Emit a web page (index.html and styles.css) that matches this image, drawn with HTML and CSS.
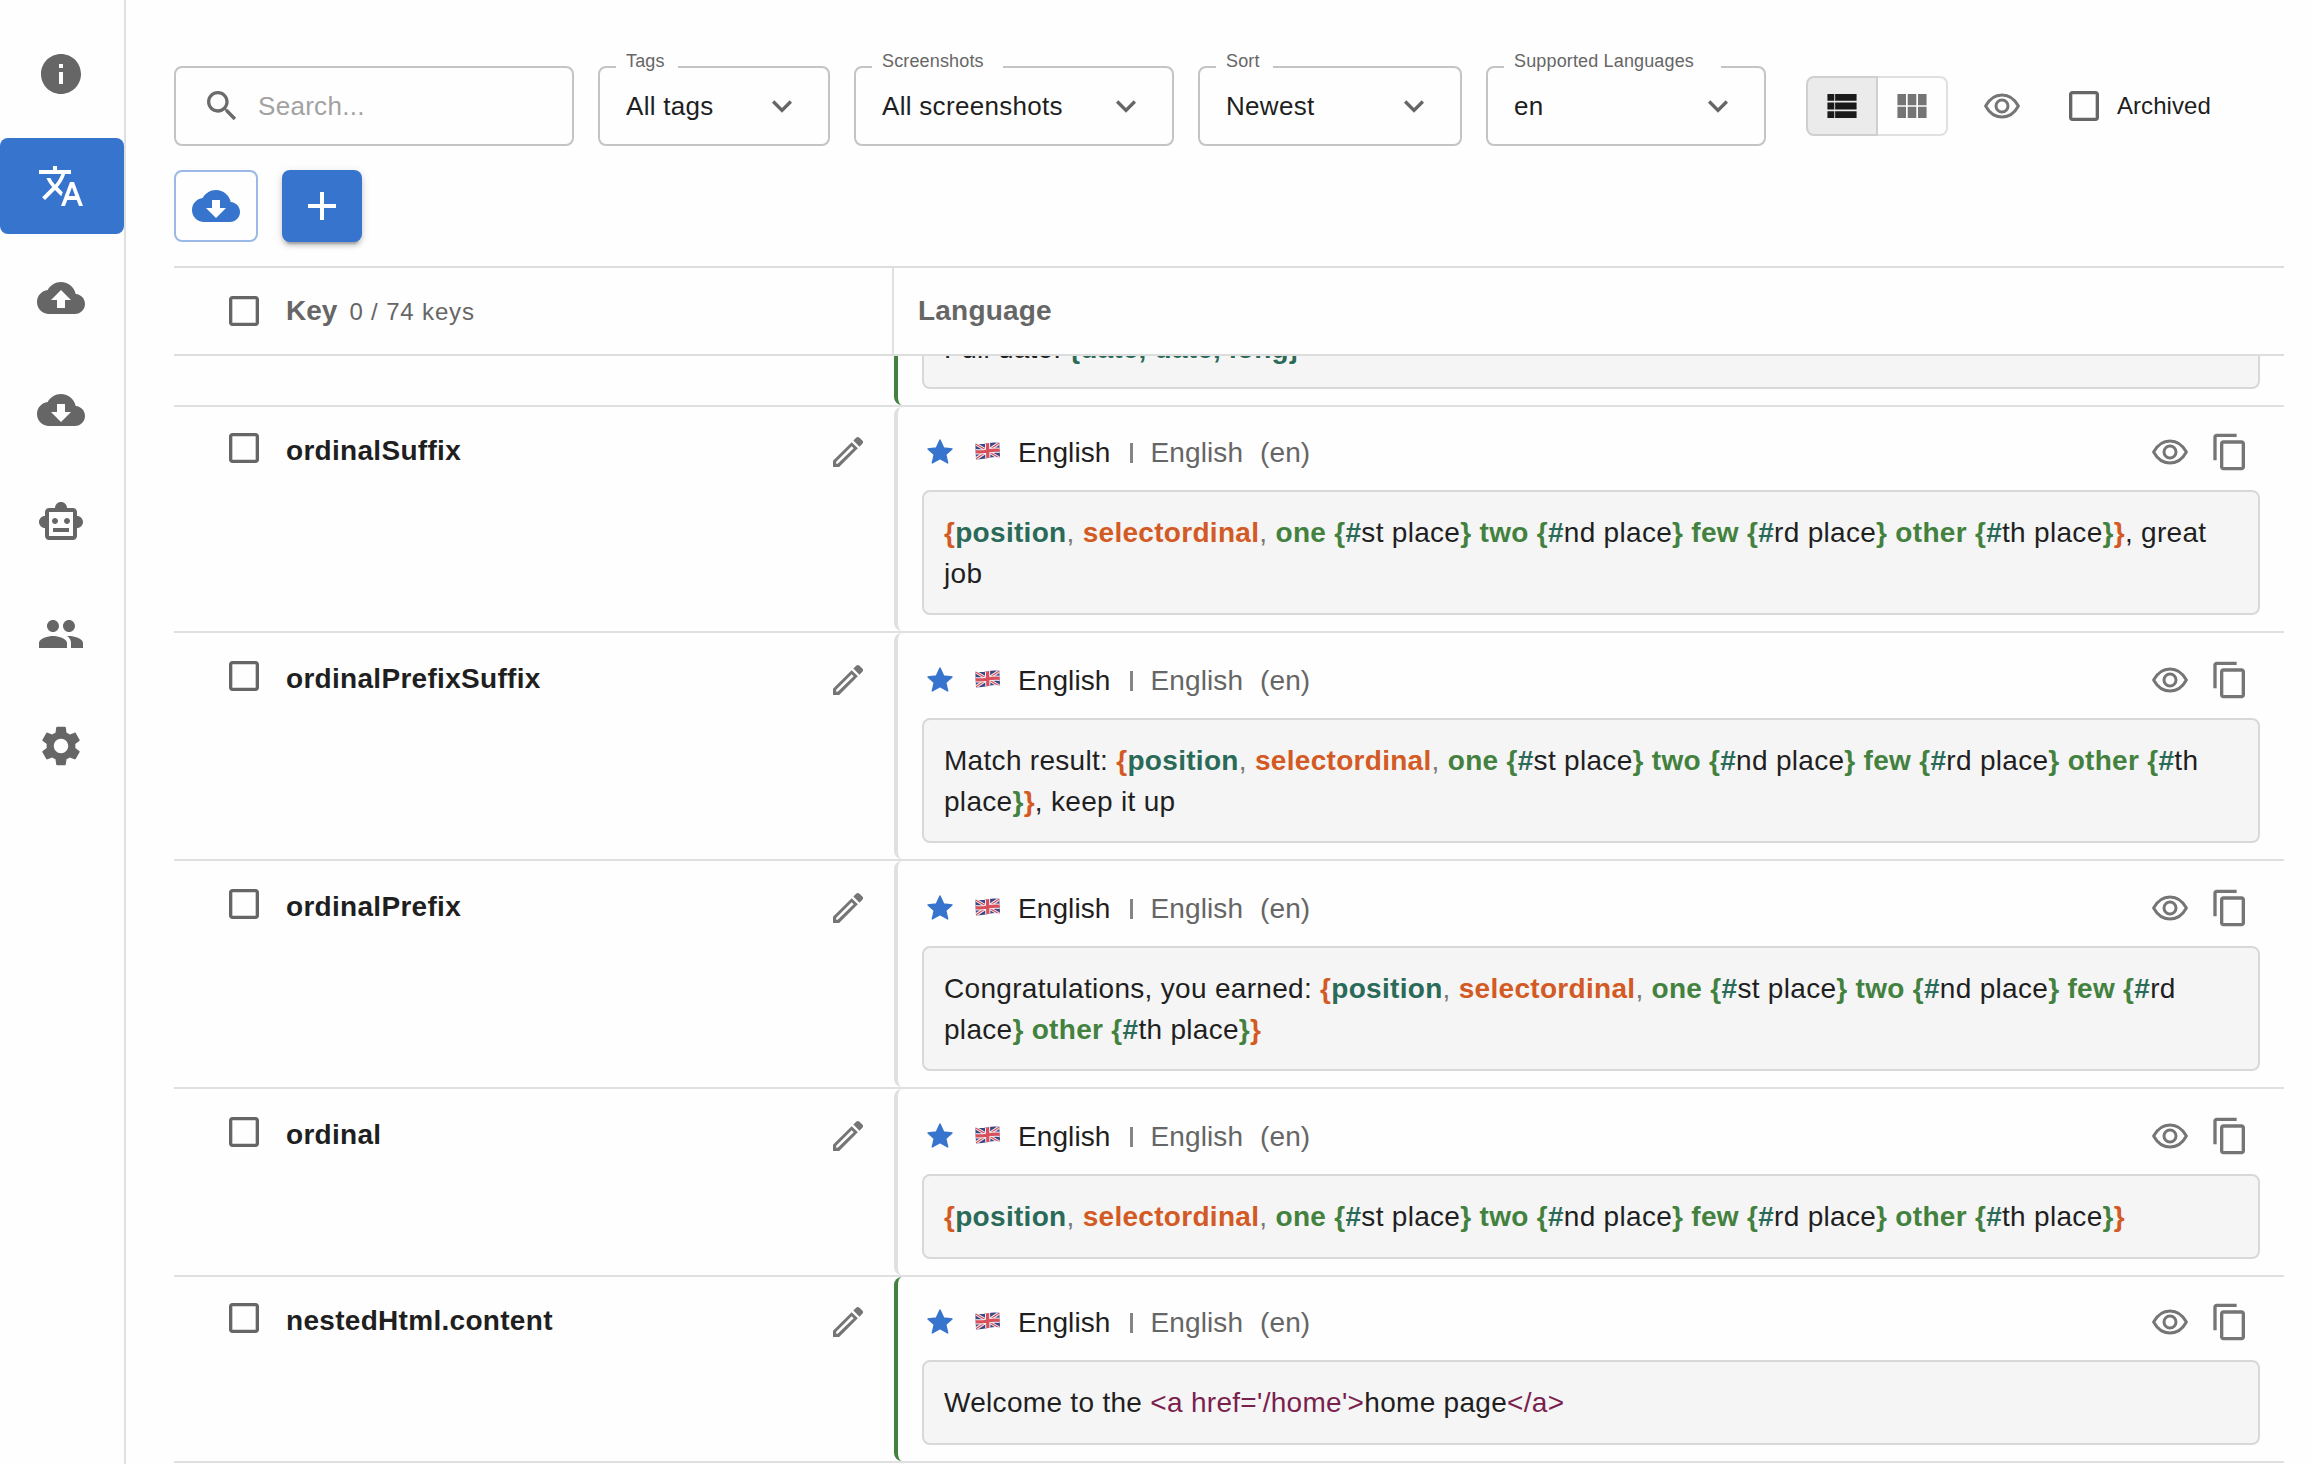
FILE: index.html
```html
<!DOCTYPE html>
<html lang="en">
<head>
<meta charset="utf-8">
<title>Translations</title>
<link rel="stylesheet" href="styles.css">
</head>
<body>
<svg class="defs" width="0" height="0" aria-hidden="true">
  <symbol id="info" viewBox="0 0 24 24"><path d="M12 2C6.48 2 2 6.48 2 12s4.480 10 10 10 10-4.480 10-10S17.520 2 12 2zm1 15h-2v-6h2v6zm0-8h-2V7h2v2z"/></symbol>
  <symbol id="translate" viewBox="0 0 24 24"><path d="M12.870 15.070l-2.540-2.510.03-.03c1.740-1.940 2.980-4.170 3.710-6.530H17V4h-7V2H8v2H1v1.990h11.170C11.500 7.920 10.440 9.750 9 11.350 8.070 10.320 7.300 9.190 6.690 8h-2c.73 1.630 1.730 3.170 2.980 4.560l-5.090 5.020L4 19l5-5 3.110 3.110.76-2.040zM18.500 10h-2L12 22h2l1.120-3h4.750L21 22h2l-4.500-12zm-2.620 7l1.620-4.330L19.120 17h-3.240z"/></symbol>
  <symbol id="upload" viewBox="0 0 24 24"><path d="M19.350 10.040C18.670 6.590 15.640 4 12 4 9.110 4 6.600 5.640 5.350 8.040 2.340 8.360 0 10.910 0 14c0 3.310 2.690 6 6 6h13c2.760 0 5-2.240 5-5 0-2.640-2.050-4.780-4.650-4.960zM14 13v4h-4v-4H7l5-5 5 5h-3z"/></symbol>
  <symbol id="download" viewBox="0 0 24 24"><path d="M19.350 10.040C18.670 6.590 15.640 4 12 4 9.110 4 6.600 5.640 5.350 8.040 2.340 8.360 0 10.910 0 14c0 3.310 2.690 6 6 6h13c2.760 0 5-2.240 5-5 0-2.640-2.050-4.780-4.650-4.960zM17 13l-5 5-5-5h3V9h4v4h3z"/></symbol>
  <symbol id="robot" viewBox="0 0 24 24"><path d="M20 9V7c0-1.100-.9-2-2-2h-3c0-1.660-1.340-3-3-3S9 3.340 9 5H6c-1.100 0-2 .9-2 2v2c-1.660 0-3 1.340-3 3s1.340 3 3 3v4c0 1.100.9 2 2 2h12c1.100 0 2-.9 2-2v-4c1.660 0 3-1.340 3-3s-1.340-3-3-3zm-2 10H6V7h12v12zm-9-6c-.83 0-1.500-.67-1.500-1.500S8.170 10 9 10s1.500.67 1.500 1.500S9.830 13 9 13zm7.500-1.500c0 .83-.67 1.500-1.500 1.500s-1.500-.67-1.500-1.500.67-1.500 1.500-1.500 1.500.67 1.500 1.500zM8 15h8v2H8v-2z"/></symbol>
  <symbol id="group" viewBox="0 0 24 24"><path d="M16 11c1.660 0 2.990-1.340 2.990-3S17.660 5 16 5s-3 1.340-3 3 1.340 3 3 3zm-8 0c1.660 0 2.990-1.340 2.990-3S9.660 5 8 5 5 6.340 5 8s1.340 3 3 3zm0 2c-2.330 0-7 1.170-7 3.500V19h14v-2.500c0-2.330-4.670-3.500-7-3.500zm8 0c-.29 0-.62.020-.97.050 1.160.84 1.970 1.970 1.970 3.450V19h6v-2.500c0-2.330-4.670-3.500-7-3.500z"/></symbol>
  <symbol id="gear" viewBox="0 0 24 24"><path d="M19.140 12.940c.04-.3.060-.61.060-.94 0-.32-.02-.64-.07-.94l2.030-1.580c.18-.14.23-.41.120-.61l-1.920-3.320c-.12-.22-.37-.29-.59-.22l-2.390.96c-.5-.38-1.030-.7-1.620-.94l-.36-2.540c-.04-.24-.24-.41-.48-.41h-3.840c-.24 0-.43.170-.47.410l-.36 2.540c-.59.240-1.130.57-1.620.94l-2.390-.96c-.22-.08-.47 0-.59.220L2.740 8.870c-.12.210-.08.470.120.610l2.030 1.580c-.05.3-.09.63-.09.94s.02.64.070.94l-2.030 1.580c-.18.140-.23.410-.12.610l1.920 3.320c.12.220.37.290.59.220l2.390-.96c.5.380 1.030.7 1.620.94l.36 2.540c.05.240.24.410.48.410h3.840c.24 0 .44-.17.470-.41l.36-2.540c.59-.24 1.130-.56 1.620-.94l2.390.96c.22.080.47 0 .59-.22l1.920-3.320c.12-.22.070-.47-.12-.61l-2.010-1.580zM12 15.600c-1.980 0-3.600-1.620-3.600-3.600s1.620-3.600 3.600-3.600 3.600 1.620 3.600 3.600-1.620 3.600-3.600 3.600z"/></symbol>
  <symbol id="search" viewBox="0 0 24 24"><path d="M15.500 14h-.79l-.28-.27C15.410 12.590 16 11.110 16 9.500 16 5.910 13.090 3 9.500 3S3 5.910 3 9.500 5.910 16 9.500 16c1.610 0 3.090-.59 4.230-1.570l.27.28v.79l5 4.990L20.490 19l-4.990-5zm-6 0C7.010 14 5 11.990 5 9.500S7.010 5 9.500 5 14 7.010 14 9.500 11.990 14 9.500 14z"/></symbol>
  <symbol id="chevron" viewBox="0 0 24 24"><path d="M7.410 8.590L12 13.170l4.590-4.580L18 10l-6 6-6-6 1.410-1.410z"/></symbol>
  <symbol id="plus" viewBox="0 0 24 24"><path d="M19 13h-6v6h-2v-6H5v-2h6V5h2v6h6v2z"/></symbol>
  <symbol id="box" viewBox="0 0 24 24"><path d="M19 5v14H5V5h14m0-2H5c-1.100 0-2 .9-2 2v14c0 1.100.9 2 2 2h14c1.100 0 2-.9 2-2V5c0-1.100-.9-2-2-2z"/></symbol>
  <symbol id="eye" viewBox="0 0 40 40"><path d="M3.600 20C8 12 14 9 20 9s12 3 16.400 11C32 28 26 31 20 31S8 28 3.600 20z" fill="none" stroke="currentColor" stroke-width="3" stroke-linejoin="round"/><circle cx="20" cy="20" r="6" fill="none" stroke="currentColor" stroke-width="3"/></symbol>
  <symbol id="copy" viewBox="0 0 24 24"><path d="M16 1H4c-1.100 0-2 .9-2 2v14h2V3h12V1zm3 4H8c-1.100 0-2 .9-2 2v14c0 1.100.9 2 2 2h11c1.100 0 2-.9 2-2V7c0-1.100-.9-2-2-2zm0 16H8V7h11v14z"/></symbol>
  <symbol id="pencil" viewBox="0 0 24 24"><path fill-rule="evenodd" d="M14.200 6.100L3 17.300V21h3.700L17.900 9.800zM14.200 8.600l1.200 1.200-9.600 9.300H4.900v-1.200z"/><path d="M15.200 5.100l1.700-1.700c.6-.6 1.400-.6 2 0l1.700 1.700c.6.6.6 1.400 0 2l-1.700 1.700z"/></symbol>
  <symbol id="star" viewBox="0 0 26 26"><path d="M13 1l3.700 8 8.300.9-6.200 5.700 1.900 8.400L13 19.700 5.300 24l1.900-8.400L1 9.900 9.300 9z" stroke="currentColor" stroke-width="1.400" stroke-linejoin="round"/></symbol>
  <symbol id="flag" viewBox="0 0 25 18">
    <clipPath id="wave"><path d="M.3 1.800Q6 2.600 12.500 1.200T24.300.8L25 15.200q-6-.6-12 .8T1 17.400z"/></clipPath>
    <g clip-path="url(#wave)" fill="none">
      <path fill="#3b4583" d="M0 0h25v18H0z"/>
      <path d="M0 1.500l25 15M25 .5l-25 17" stroke="#f4f0f2" stroke-width="3.200"/>
      <path d="M0 1.500l25 15M25 .5l-25 17" stroke="#d8505c" stroke-width="1.200"/>
      <path d="M12.500 0l.4 18M0 9.700Q6 10.300 12.500 9T25 8.300" stroke="#f4f0f2" stroke-width="5.200"/>
      <path d="M12.500 0l.4 18M0 9.700Q6 10.300 12.500 9T25 8.300" stroke="#d8505c" stroke-width="3.200"/>
    </g>
  </symbol>
</svg>
<div class="app">
  <nav class="sidebar">
    <a class="nav"><svg><use href="#info"/></svg></a>
    <a class="nav active"><svg><use href="#translate"/></svg></a>
    <a class="nav"><svg><use href="#upload"/></svg></a>
    <a class="nav"><svg><use href="#download"/></svg></a>
    <a class="nav"><svg><use href="#robot"/></svg></a>
    <a class="nav"><svg><use href="#group"/></svg></a>
    <a class="nav"><svg><use href="#gear"/></svg></a>
  </nav>
  <main class="main">
    <div class="toolbar">
      <div class="search"><svg class="i40"><use href="#search"/></svg><span>Search...</span></div>
      <div class="select tags"><label>Tags</label><span>All tags</span><svg class="i40"><use href="#chevron"/></svg></div>
      <div class="select shots"><label>Screenshots</label><span>All screenshots</span><svg class="i40"><use href="#chevron"/></svg></div>
      <div class="select sort"><label>Sort</label><span>Newest</span><svg class="i40"><use href="#chevron"/></svg></div>
      <div class="select langs"><label>Supported Languages</label><span>en</span><svg class="i40"><use href="#chevron"/></svg></div>
      <div class="toggle">
        <div class="opt on"><svg viewBox="0 0 17 14"><path d="M0 0h4v4H0zM4.500 0H17v4H4.500zM0 5h4v4H0zM4.500 5H17v4H4.500zM0 10h4v4H0zM4.500 10H17v4H4.500z"/></svg></div>
        <div class="opt"><svg viewBox="0 0 17 14"><path d="M0 0h5v6.500H0zM6 0h5v6.500H6zM12 0h5v6.500h-5zM0 7.500h5V14H0zM6 7.500h5V14H6zM12 7.500h5V14h-5z"/></svg></div>
      </div>
      <svg class="i40 eye"><use href="#eye"/></svg>
      <div class="archived"><svg class="i40"><use href="#box"/></svg><span>Archived</span></div>
    </div>
    <div class="actions">
      <div class="btn outline"><svg><use href="#download"/></svg></div>
      <div class="btn solid"><svg><use href="#plus"/></svg></div>
    </div>
    <section class="table">
      <header class="head">
        <div class="keyhead"><svg class="i40"><use href="#box"/></svg><b>Key</b><span>0 / 74 keys</span></div>
        <div class="langhead">Language</div>
      </header>
      <div class="row first">
        <div class="key"></div>
        <div class="lang green"><div class="value"><div class="clip">Full date: <i class="t">{date, date, long}</i></div></div></div>
      </div>
      <div class="row r1">
        <div class="key"><svg class="i40"><use href="#box"/></svg><b>ordinalSuffix</b><svg class="i40 pen"><use href="#pencil"/></svg></div>
        <div class="lang">
          <div class="title"><svg class="star"><use href="#star"/></svg><svg class="flag"><use href="#flag"/></svg><span>English</span><i class="bar"></i><span class="muted">English</span><span class="muted">(en)</span><svg class="i40 view"><use href="#eye"/></svg><svg class="i40 copy"><use href="#copy"/></svg></div>
          <div class="value two"><i class="o">{</i><i class="t">position</i><i class="c">,</i> <i class="o">selectordinal</i><i class="c">,</i> <i class="g">one {</i><i class="t">#</i>st place<i class="g">} two {</i><i class="t">#</i>nd place<i class="g">} few {</i><i class="t">#</i>rd place<i class="g">} other {</i><i class="t">#</i>th place<i class="g">}</i><i class="o">}</i>, great<br>job</div>
        </div>
      </div>
      <div class="row r2">
        <div class="key"><svg class="i40"><use href="#box"/></svg><b>ordinalPrefixSuffix</b><svg class="i40 pen"><use href="#pencil"/></svg></div>
        <div class="lang">
          <div class="title"><svg class="star"><use href="#star"/></svg><svg class="flag"><use href="#flag"/></svg><span>English</span><i class="bar"></i><span class="muted">English</span><span class="muted">(en)</span><svg class="i40 view"><use href="#eye"/></svg><svg class="i40 copy"><use href="#copy"/></svg></div>
          <div class="value two">Match result: <i class="o">{</i><i class="t">position</i><i class="c">,</i> <i class="o">selectordinal</i><i class="c">,</i> <i class="g">one {</i><i class="t">#</i>st place<i class="g">} two {</i><i class="t">#</i>nd place<i class="g">} few {</i><i class="t">#</i>rd place<i class="g">} other {</i><i class="t">#</i>th<br>place<i class="g">}</i><i class="o">}</i>, keep it up</div>
        </div>
      </div>
      <div class="row r2">
        <div class="key"><svg class="i40"><use href="#box"/></svg><b>ordinalPrefix</b><svg class="i40 pen"><use href="#pencil"/></svg></div>
        <div class="lang">
          <div class="title"><svg class="star"><use href="#star"/></svg><svg class="flag"><use href="#flag"/></svg><span>English</span><i class="bar"></i><span class="muted">English</span><span class="muted">(en)</span><svg class="i40 view"><use href="#eye"/></svg><svg class="i40 copy"><use href="#copy"/></svg></div>
          <div class="value two">Congratulations, you earned: <i class="o">{</i><i class="t">position</i><i class="c">,</i> <i class="o">selectordinal</i><i class="c">,</i> <i class="g">one {</i><i class="t">#</i>st place<i class="g">} two {</i><i class="t">#</i>nd place<i class="g">} few {</i><i class="t">#</i>rd<br>place<i class="g">} other {</i><i class="t">#</i>th place<i class="g">}</i><i class="o">}</i></div>
        </div>
      </div>
      <div class="row r4">
        <div class="key"><svg class="i40"><use href="#box"/></svg><b>ordinal</b><svg class="i40 pen"><use href="#pencil"/></svg></div>
        <div class="lang">
          <div class="title"><svg class="star"><use href="#star"/></svg><svg class="flag"><use href="#flag"/></svg><span>English</span><i class="bar"></i><span class="muted">English</span><span class="muted">(en)</span><svg class="i40 view"><use href="#eye"/></svg><svg class="i40 copy"><use href="#copy"/></svg></div>
          <div class="value"><i class="o">{</i><i class="t">position</i><i class="c">,</i> <i class="o">selectordinal</i><i class="c">,</i> <i class="g">one {</i><i class="t">#</i>st place<i class="g">} two {</i><i class="t">#</i>nd place<i class="g">} few {</i><i class="t">#</i>rd place<i class="g">} other {</i><i class="t">#</i>th place<i class="g">}</i><i class="o">}</i></div>
        </div>
      </div>
      <div class="row r5">
        <div class="key"><svg class="i40"><use href="#box"/></svg><b>nestedHtml.content</b><svg class="i40 pen"><use href="#pencil"/></svg></div>
        <div class="lang green">
          <div class="title"><svg class="star"><use href="#star"/></svg><svg class="flag"><use href="#flag"/></svg><span>English</span><i class="bar"></i><span class="muted">English</span><span class="muted">(en)</span><svg class="i40 view"><use href="#eye"/></svg><svg class="i40 copy"><use href="#copy"/></svg></div>
          <div class="value">Welcome to the <i class="m">&lt;a href='/home'&gt;</i>home page<i class="m">&lt;/a&gt;</i></div>
        </div>
      </div>
    </section>
  </main>
</div>
</body>
</html>
```
FILE: styles.css
```css
* { box-sizing: border-box; }
html, body { margin: 0; height: 100%; overflow: hidden; background: #fefefe; }
body { font-family: "Liberation Sans", Arial, sans-serif; color: #1f1f1f; font-size: 28px; letter-spacing: 0.3px; font-variant-ligatures: none; }
svg { fill: currentColor; flex: none; display: block; }
i { font-style: normal; }
.defs { position: absolute; }
.i40 { width: 40px; height: 40px; }

.app { display: flex; height: 1464px; }
.sidebar { width: 126px; border-right: 2px solid #e0e0e0; padding-top: 26px; display: flex; flex-direction: column; gap: 16px; color: #666; flex: none; }
.nav { height: 96px; display: flex; align-items: center; justify-content: center; padding-right: 2px; border-radius: 8px; }
.nav svg { width: 48px; height: 48px; }
.nav.active { background: #3774cd; color: #fff; }

.main { padding: 66px 28px 0 48px; width: 2186px; display: flex; flex-direction: column; }
.toolbar { display: flex; align-items: center; gap: 24px; height: 80px; font-size: 26px; white-space: nowrap; }
.search, .select { height: 80px; border: 2px solid #c4c4c4; border-radius: 8px; display: flex; align-items: center; }
.search { width: 400px; padding-left: 26px; gap: 16px; color: #a2a2a2; }
.search svg { color: #6b6b6b; }
.select { position: relative; padding: 0 26px; justify-content: space-between; }
.select svg { color: #666; }
.select label { position: absolute; left: 16px; top: -19px; height: 24px; line-height: 24px; padding-left: 10px; font-size: 18px; letter-spacing: 0.15px; color: #666; background: #fefefe; }
.tags { width: 232px; } .tags label { width: 62px; }
.shots { width: 320px; } .shots label { width: 131px; }
.sort { width: 264px; } .sort label { width: 57px; }
.langs { width: 280px; } .langs label { width: 217px; }
.toggle { display: flex; margin-left: 16px; width: 142px; height: 60px; }
.opt { width: 70px; border: 2px solid #e0e0e0; border-left: 0; border-radius: 0 8px 8px 0; display: flex; align-items: center; justify-content: center; color: #757575; }
.opt svg { width: 30px; height: 24px; }
.opt.on { width: 72px; border: 2px solid #cfcfcf; border-radius: 8px 0 0 8px; background: #ebebeb; color: #1a1a1a; }
.eye { margin-left: 10px; color: #757575; }
.archived { display: flex; align-items: center; gap: 13px; margin-left: 18px; font-size: 24px; letter-spacing: 0.05px; }
.archived svg { color: #666; }

.actions { display: flex; gap: 24px; margin-top: 24px; }
.btn { height: 72px; border-radius: 8px; display: flex; align-items: center; justify-content: center; }
.btn svg { width: 48px; height: 48px; }
.outline { width: 84px; border: 2px solid #9bb9e6; color: #3774cd; }
.solid { width: 80px; background: #3774cd; color: #fff; box-shadow: 0 6px 2px -4px rgba(0,0,0,.2), 0 4px 4px rgba(0,0,0,.14), 0 2px 10px rgba(0,0,0,.12); }

.table { margin-top: 24px; }
.head, .row { display: grid; grid-template-columns: 720px 1fr; border-top: 2px solid #e0e0e0; }
.head { height: 88px; color: #666; border-top-color: #ddd; }
.keyhead { display: flex; align-items: center; padding-left: 50px; border-right: 2px solid #e0e0e0; }
.keyhead b { margin-left: 22px; letter-spacing: 0; }
.keyhead span { font-size: 24px; letter-spacing: .85px; margin-left: 12px; padding-top: 2px; }
.langhead { font-weight: bold; padding-left: 24px; display: flex; align-items: center; letter-spacing: 0.2px; }
.row { overflow: hidden; }
.r1 { height: 226px; }
.r2 { height: 228px; }
.r4 { height: 188px; }
.r5 { height: 188px; border-bottom: 2px solid #e0e0e0; }
.key { display: flex; align-items: flex-start; padding: 21px 26px 0 50px; }
.key > svg { color: #666; }
.key b { margin-left: 22px; line-height: 40px; padding-top: 3px; }
.key .pen { margin: 4px 0 0 auto; color: #757575; }
.lang { border-left: 4px solid #e0e0e0; border-radius: 8px 0 0 8px; padding: 25px 24px 0 24px; }
.lang.green { border-left-color: #43813f; }
.r2 .key, .r4 .key { padding-top: 23px; }
.r2 .lang, .r4 .lang { padding-top: 27px; }
.title { display: flex; align-items: center; height: 40px; margin-bottom: 18px; letter-spacing: 0.1px; }
.title span { padding-top: 1px; }
.star { width: 26px; height: 26px; margin-left: 5px; color: #3774cd; }
.flag { width: 25px; height: 18px; margin: 0 18px 2px 22px; }
.bar { width: 3px; height: 20px; margin: 2px 18px 0 19px; background: #858585; }
.muted { color: #666; margin-right: 17px; }
.view { margin-left: auto; color: #757575; }
.copy { margin: 0 10px 0 20px; color: #757575; }
.value { width: 1338px; height: 85px; border: 2px solid #d8d8d8; border-radius: 8px; background: #f5f5f5; padding: 20px 0 0 20px; line-height: 41px; white-space: nowrap; }
.value.two { height: 125px; }
.value i { font-weight: bold; }
.value .c { font-weight: normal; color: #777; }
.value .m { font-weight: normal; color: #7b1f4f; }
.o { color: #d35a24; }
.t { color: #2a6a58; }
.g { color: #43813f; }

/* row scrolled partly under the table head */
.first { height: 51px; border-top-color: #ddd; }
.first .lang { padding-top: 0; border-top-left-radius: 0; }
.first .value { height: 33px; border-top: 0; border-radius: 0 0 8px 8px; padding-top: 0; overflow: hidden; }
.clip { margin-top: -28px; height: 41px; letter-spacing: 0.2px; }
```
